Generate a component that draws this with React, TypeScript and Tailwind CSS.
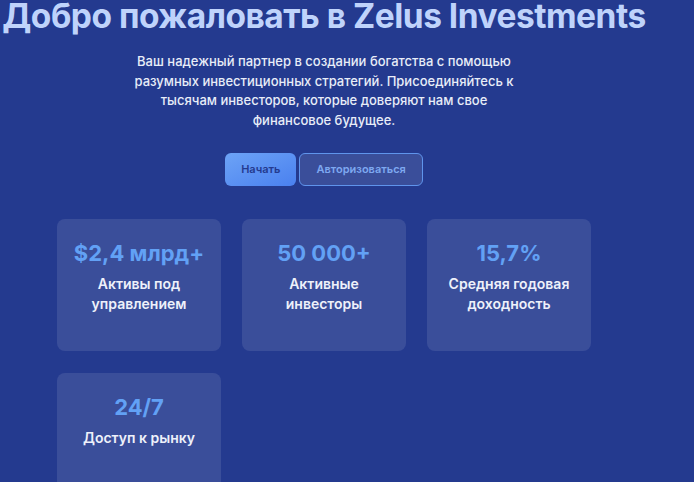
const stats = [
  { value: "$2,4 млрд+", label: "Активы под управлением" },
  { value: "50 000+", label: "Активные инвесторы" },
  { value: "15,7%", label: "Средняя годовая доходность" },
  { value: "24/7", label: "Доступ к рынку" },
];

export default function App() {
  return (
    <div
      className="min-h-screen overflow-hidden bg-[#243a8f]"
      style={{ fontFamily: "Inter, 'Noto Sans', sans-serif" }}
    >
      <div className="w-[648px] flex flex-col items-center text-center">
        <h1 className="mt-[-4px] text-[33.5px] font-bold leading-[40px] tracking-[-0.5px] text-[#bfd3fb] whitespace-nowrap">
          Добро пожаловать в Zelus Investments
        </h1>
        <p className="mt-[16px] max-w-[392px] text-[13px] leading-[19.5px] font-medium text-[#e8edf8]">
          Ваш надежный партнер в создании богатства с помощью разумных
          инвестиционных стратегий. Присоединяйтесь к тысячам инвесторов,
          которые доверяют нам свое финансовое будущее.
        </p>
        <div className="mt-[23px] flex gap-[3px]">
          <button className="h-[33px] px-4 rounded-md bg-gradient-to-br from-[#6da3f6] to-[#4a80ef] text-[11px] font-semibold text-[#243a8f]">
            Начать
          </button>
          <button className="h-[33px] px-4 rounded-md border border-[#5f94ec] bg-white/10 text-[11px] font-semibold text-[#7ea8f0]">
            Авторизоваться
          </button>
        </div>
        <div className="mt-[33px] w-[534px] grid grid-cols-3 gap-x-[21px] gap-y-[22px]">
          {stats.map((s) => (
            <div
              key={s.value}
              className="h-[132px] rounded-lg bg-white/10 px-3 pt-[18px] flex flex-col items-center"
            >
              <div className="text-[22px] font-bold leading-8 text-[#62a1f5] whitespace-nowrap">
                {s.value}
              </div>
              <div className="mt-[5px] px-1 text-sm font-semibold leading-5 text-[#eef1fa]">
                {s.label}
              </div>
            </div>
          ))}
        </div>
      </div>
    </div>
  );
}
